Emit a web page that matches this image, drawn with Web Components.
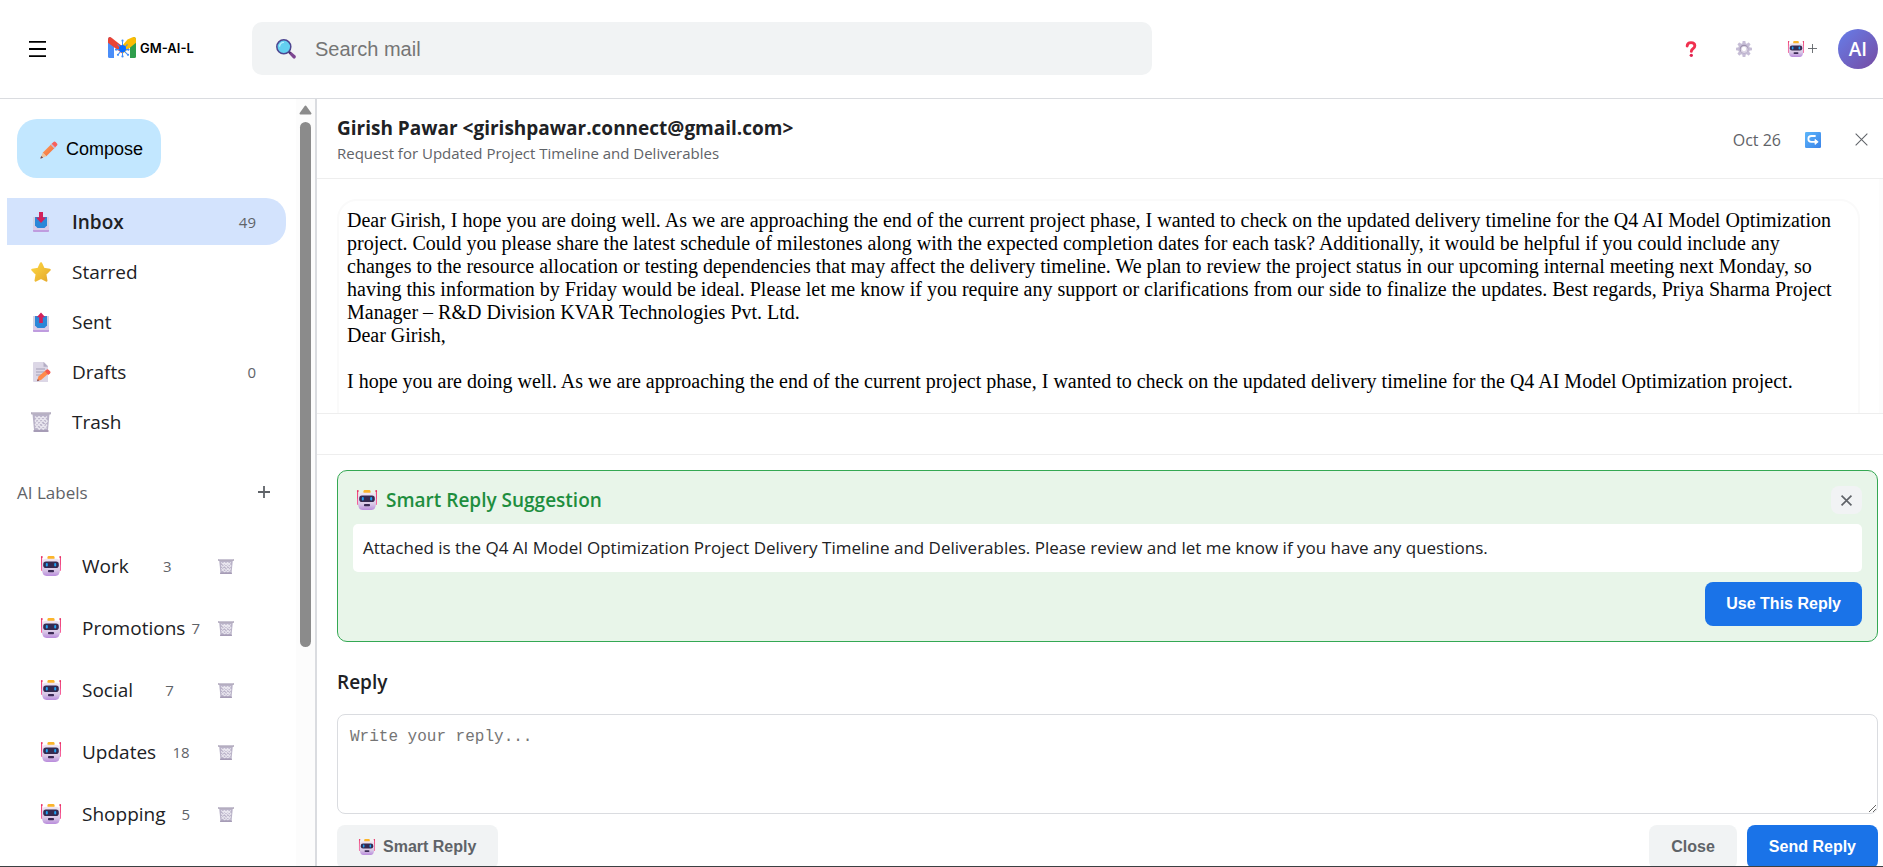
<!DOCTYPE html>
<html lang="en">
<head>
<meta charset="utf-8">
<title>GM-AI-L</title>
<style>
  html, body { margin: 0; height: 100%; }
  body { font-family: "Open Sans", "Noto Sans", sans-serif; color: #202124; background: #fff; overflow: hidden; }
</style>
</head>
<body>
<mail-app></mail-app>

<script>
const ICONS = {
  robot: `<defs><linearGradient id="h" x1="0" y1="0" x2="0" y2="1"><stop offset="0" stop-color="#efe6f3"/><stop offset=".65" stop-color="#d9c9e6"/><stop offset="1" stop-color="#b98bdc"/></linearGradient></defs>
    <path d="M.6 1v13M19.400 1v13" stroke="#f0407a" stroke-width="1.100"/><circle cx=".8" cy="1" r=".9" fill="#e82f63"/><circle cx="19.200" cy="1" r=".9" fill="#e82f63"/>
    <rect x="0" y="8.500" width="2.500" height="6.500" rx="1" fill="#f5609a"/><rect x="17.500" y="8.500" width="2.500" height="6.500" rx="1" fill="#f5609a"/>
    <rect x="6.500" y="0" width="7" height="4" rx="1.200" fill="#fbb52c"/>
    <path d="M5 2.800h10q4 0 4 4v7q-.2 6.200-4.600 6.200H5.600Q1.200 20 1 13.800v-7q0-4 4-4z" fill="url(#h)"/>
    <rect x="2.200" y="5.600" width="15.600" height="6.400" rx="2.800" fill="#352a50"/>
    <rect x="4.800" y="7" width="2" height="3.600" rx="1" fill="#1fa2f2"/><rect x="13.200" y="7" width="2" height="3.600" rx="1" fill="#1fa2f2"/>
    <rect x="7" y="14" width="6" height="2.200" rx=".8" fill="#3b2a55"/>`,
  trash: `<path d="M1.500 2h17l-1.700 18H3.200z" fill="#b9b2c8"/>
    <path d="M4 4.500l11.500 12M8 4.500l8 8M12 4.500l4.500 5M4 9l8.500 8.500M4.500 13l4 4.500M16 4.500L4.500 16M12 4.500L4 13M8 4.500L4 9M16.500 9L8 17.500M16 13l-4 4.500" stroke="#e9e6ef" stroke-width="1.300"/>
    <rect x="0" y="0" width="20" height="2.600" rx=".8" fill="#b4adbf"/><path d="M1 .7h18" stroke="#dcd8e4" stroke-width=".7"/><rect x="2.500" y="18" width="15" height="2" rx=".6" fill="#a69cb6"/>`,
  inbox: `<path d="M2 5h16v12H2z" fill="#cfd3e4"/><path d="M4 5h12v8l-3 3H7l-3-3z" fill="#2b87d8"/>
    <path d="M2 14h4.500l1.500 2h4l1.500-2H18v5q0 1-1 1H3q-1 0-1-1z" fill="#d9cbe6"/><path d="M4 10h12v3.500l-2.500 2.500h-7L4 13.500z" fill="#2b87d8"/><path d="M2 18h16v1q0 1-1 1H3q-1 0-1-1z" fill="#bf9cdf"/>
    <path d="M8 0h4v5.500h3L10 11 5 5.500h3z" fill="#d3225b"/>`,
  sent: `<path d="M2 4h16v13H2z" fill="#cfd3e4"/><path d="M4 4h12v9l-3 3H7l-3-3z" fill="#2b87d8"/>
    <path d="M2 14h4.500l1.500 2h4l1.500-2H18v5q0 1-1 1H3q-1 0-1-1z" fill="#d9cbe6"/><path d="M4 10h12v3.500l-2.500 2.500h-7L4 13.500z" fill="#2b87d8"/><path d="M2 18h16v1q0 1-1 1H3q-1 0-1-1z" fill="#bf9cdf"/>
    <path d="M8.200 11h3.600V5.300h2.400L10 .5 5.800 5.300h2.400z" fill="#d3225b"/>`,
  star: `<defs><linearGradient id="s" x1="0" y1="0" x2="1" y2="1"><stop offset="0" stop-color="#fdd642"/><stop offset="1" stop-color="#e5a92c"/></linearGradient></defs>
    <path d="M10 1.300l2.700 5.600 6 .9-4.400 4.300 1.100 6.500L10 15.700 4.600 18.600l1.100-6.500L1.300 7.800l6-.9z" fill="url(#s)" stroke="url(#s)" stroke-width="2.200" stroke-linejoin="round"/>`,
  draft: `<path d="M3 0h10l4 4v16H3q-1 0-1-1V1q0-1 1-1z" fill="#dcd7e6"/><path d="M12.500 0L17 4.800h-4.500z" fill="#b3adc4"/>
    <path d="M5 7h9M5 10h9M5 13h7" stroke="#a49fb5" stroke-width="1.100"/>
    <path d="M6 19l1.500-4.500 7-6 3 3-7.500 6.500z" fill="#ff8a4c"/><path d="M14 9l1.800-1.500q1-.6 2 .5l1.400 1.600q.8 1-.2 1.900L17.200 13z" fill="#f4574d"/><path d="M6 19.300l.8-2.300 1.400 1.500z" fill="#7d4e55"/>`,
  pencil: `<defs><linearGradient id="p" x1="0" y1="0" x2="1" y2="1"><stop offset="0" stop-color="#ffa35a"/><stop offset="1" stop-color="#f2663b"/></linearGradient></defs>
    <path d="M3 13L13 3l4 4L7 17z" fill="url(#p)"/><path d="M11.700 4.300l4 4 1.600-1.600-4-4z" fill="#c9bbd6"/><path d="M13 3l2-2q1.200-1 2.400.2l1.500 1.500q1.100 1.200 0 2.300l-2 2z" fill="#f7605c"/>
    <path d="M3 13l4 4-6 2.400q-.8.200-.5-.6z" fill="#f0c49a"/><path d="M1.500 16.600l2 2-2.500.9q-.8.200-.5-.6z" fill="#6b4657"/>`,
  search: `<path d="M12.700 14.500l2-2 4.600 4q1.200 1.300.1 2.500-1.200 1.200-2.500.1z" fill="#7d4691"/><path d="M11.500 13l1.700-1.500 2 2-1.700 1.500z" fill="#4b3466"/>
    <circle cx="7.800" cy="7.800" r="7" fill="#63d0f0" stroke="#4d4590" stroke-width="1.500"/><path d="M3.600 7.200q.4-3.400 3.800-3.900" stroke="#b6efff" stroke-width="1.300" fill="none" stroke-linecap="round"/>`,
  question: `<path d="M5.200 6.200Q5.400 2 10 2q4.800 0 4.800 4 0 2.200-2.400 3.700-2 1.200-2 3.300" fill="none" stroke="#f0304f" stroke-width="3.600" stroke-linecap="round"/><circle cx="10.400" cy="17.900" r="2.100" fill="#e0244f"/>`,
  gear: `<g fill="#c6bdd6"><circle cx="10" cy="10" r="7.400"/><rect x="8" y="0" width="4" height="20" rx="1"/><rect x="0" y="8" width="20" height="4" rx="1"/><g transform="rotate(45 10 10)"><rect x="8" y="0" width="4" height="20" rx="1"/><rect x="0" y="8" width="20" height="4" rx="1"/></g></g><circle cx="10" cy="10" r="5.400" fill="#9d92ae"/><circle cx="10.300" cy="10.500" r="4.400" fill="#ddd6e6"/><circle cx="10" cy="10" r="2.700" fill="#fff"/>`,
  reply: `<defs><linearGradient id="r" x1="0" y1="0" x2="1" y2="1"><stop offset="0" stop-color="#5cb6fb"/><stop offset="1" stop-color="#3b83e8"/></linearGradient></defs><rect width="20" height="20" rx="1.500" fill="url(#r)"/>
    <path d="M12.500 5H8q-3.800 0-3.800 3.600T8 12.300h6" stroke="#fff" stroke-width="2.200" fill="none" stroke-linecap="round"/><path d="M12.500 9.200l4 3.100-4 3.300z" fill="#fff" stroke="#fff" stroke-linejoin="round"/>`,
  menu: `<path d="M0 1h20M0 10h20M0 19h20" stroke="#000" stroke-width="2.300"/>`,
  plus: `<path d="M10 0v20M0 10h20" stroke="#5f6368" stroke-width="var(--stroke, 2)"/>`,
  close: `<path d="M1 1l18 18M19 1L1 19" stroke="#5f6368" stroke-width="var(--stroke, 2)"/>`,
  mail: `<path d="M0 2.500Q0 0 2.200 0L6 4v16H1.500Q0 20 0 18.500z" fill="#4a8df8"/><path d="M22 4l3.800-4Q28 0 28 2.500v16q0 1.500-1.500 1.500H22z" fill="#2f9e4c"/>
    <path d="M19.500 2.300L24.600.2Q28-.6 28 3v2.400L14.500 16l-.5-7.500z" fill="#fbbc04"/><path d="M0 3Q0-.8 3.200.4L14 8.600V15.500L0 5.400z" fill="#ea4335"/>
    <path d="M14.500 4v14M8 12h13M9.500 7l10 9.500M19.500 7l-9 9" stroke="#3f8cf7" stroke-width="1"/><circle cx="14.500" cy="11" r="3.500" fill="#0a6bff"/><g fill="#3f8cf7"><circle cx="14.500" cy="3.500" r="1.100"/><circle cx="10" cy="17" r="1.100"/><circle cx="14.500" cy="18.500" r="1.100"/><circle cx="20" cy="17" r="1.100"/><circle cx="8" cy="12" r="1.100"/><circle cx="20.500" cy="12" r="1.100"/></g>`
};

function define(name, html, setup) {
  const template = document.createElement('template');
  template.innerHTML = html;
  customElements.define(name, class extends HTMLElement {
    constructor() {
      super();
      this.attachShadow({ mode: 'open' }).append(template.content.cloneNode(true));
    }
    connectedCallback() { if (setup) setup(this, this.shadowRoot); }
  });
}

define('ui-icon', `<style>
  :host { display: inline-block; flex: none; width: 20px; height: 20px; }
  svg { display: block; width: 100%; height: 100%; overflow: visible; }
</style><svg aria-hidden="true" fill="none" preserveAspectRatio="none"></svg>`, (el, root) => {
  const name = el.getAttribute('name');
  const svg = root.querySelector('svg');
  svg.setAttribute('viewBox', name === 'mail' ? '0 0 28 20' : '0 0 20 20');
  svg.innerHTML = ICONS[name];
});

define('action-button', `<style>
  :host { display: block; }
  button { display: flex; align-items: center; gap: 8px; height: 44px; padding: 0 var(--button-padding, 21px); border: 0; border-radius: 8px;
    font: bold 16px "Liberation Sans", Arial, sans-serif; color: #5f6368; background: #f1f3f4; white-space: nowrap; cursor: pointer; }
  :host([primary]) button { color: #fff; background: #1a73e8; }
</style><button type="button"><slot></slot></button>`);

define('scroll-track', `<style>
  :host { display: flex; flex-direction: column; align-items: center; flex: none; width: 19px; background: #fcfcfc; }
  svg { display: block; margin: 6px 0 7px; }
  i { width: 11px; height: 71%; max-height: 525px; border-radius: 6px; background: #8b8b8b; }
</style><svg width="13" height="10" aria-hidden="true"><path d="M6.500 1.500L11.500 8.500H1.500z" fill="#8b8b8b" stroke="#8b8b8b" stroke-width="2" stroke-linejoin="round"/></svg><i></i>`);

define('app-header', `<style>
  :host { display: flex; align-items: center; height: 97px; padding: 0 5px 1px 17px; border-bottom: 1px solid #dadce0; box-sizing: content-box; }
  button { display: flex; align-items: center; justify-content: center; width: 53px; height: 40px; padding: 0; border: 0; background: none; cursor: pointer; }
  .menu { width: 41px; margin-right: 50px; }
  .menu ui-icon { width: 17px; height: 16px; }
  .logo { display: flex; align-items: center; gap: 4px; width: 144px; padding-bottom: 2px; color: #000; text-decoration: none; font: 600 13px Inter, sans-serif; }
  .logo ui-icon { width: 28px; height: 21px; }
  .search { display: flex; align-items: center; gap: 19px; flex: 0 1 900px; box-sizing: border-box; height: 53px; padding: 0 24px; border-radius: 10px; background: #f1f3f4; }
  input { flex: 1; min-width: 0; padding: 0; border: 0; outline: 0; background: none; font: 20px/24px "Liberation Sans", Arial, sans-serif; color: #202124; }
  input::placeholder { color: #757575; opacity: 1; }
  nav { display: flex; align-items: center; margin-left: auto; }
  nav ui-icon { width: 16px; height: 16px; }
  .label { width: 68px; gap: 4px; padding-right: 3px; }
  .label .plus { width: 9px; height: 9px; }
  .avatar { width: 40px; border-radius: 50%; color: #fff; background: linear-gradient(135deg, #667eea, #764ba2); font: 600 19px/40px "Open Sans", sans-serif; }
</style>
<button class="menu" type="button" aria-label="Menu"><ui-icon name="menu"></ui-icon></button>
<a class="logo" href="#"><ui-icon name="mail"></ui-icon><span>GM-AI-L</span></a>
<label class="search"><ui-icon name="search"></ui-icon><input type="text" placeholder="Search mail" aria-label="Search mail"></label>
<nav>
  <button type="button" aria-label="Help"><ui-icon name="question"></ui-icon></button>
  <button type="button" aria-label="Settings"><ui-icon name="gear"></ui-icon></button>
  <button class="label" type="button" aria-label="Add AI label"><ui-icon name="robot"></ui-icon><ui-icon class="plus" name="plus"></ui-icon></button>
  <button class="avatar" type="button">AI</button>
</nav>`);

define('folder-item', `<style>
  :host { display: block; }
  a { display: flex; align-items: center; height: 47px; padding: 0 30px 0 24px; border-radius: 0 20px 20px 0; color: #202124; text-decoration: none; font-size: 19px; }
  :host([active]) a { background: #d3e3fd; font-weight: 500; }
  .name { flex: 1; margin-left: 21px; }
  .count { font-size: 15px; color: #5f6368; }
  :host([active]) .name { font-weight: 600; }
</style><a href="#"><span class="name"><slot></slot></span><span class="count"></span></a>`, (el, root) => {
  const icon = document.createElement('ui-icon');
  icon.setAttribute('name', el.getAttribute('icon'));
  root.querySelector('a').prepend(icon);
  root.querySelector('.count').textContent = el.getAttribute('count') || '';
});

define('label-item', `<style>
  :host { display: flex; align-items: center; height: 62px; padding: 0 50px 0 41px; }
  a { display: flex; flex: 1; align-items: center; color: #202124; text-decoration: none; font-size: 19px; }
  .name { margin-left: 21px; }
  .count { margin: 0 auto; font-size: 15px; color: #5f6368; }
  button { padding: 12px; border: 0; background: none; cursor: pointer; }
  button ui-icon { display: block; width: 16px; height: 15px; }
</style><a href="#"><ui-icon name="robot"></ui-icon><span class="name"><slot></slot></span><span class="count"></span></a>
<button type="button" aria-label="Delete label"><ui-icon name="trash"></ui-icon></button>`, (el, root) => {
  root.querySelector('.count').textContent = el.getAttribute('count');
});

define('mail-sidebar', `<style>
  :host { display: flex; box-sizing: border-box; width: 317px; border-right: 2px solid #dadce0; overflow: hidden; }
  .content { flex: 1; min-width: 0; }
  .compose { display: flex; align-items: center; gap: 8px; height: 59px; margin: 20px 0 20px 17px; padding: 2px 18px 0 23px; border: 0; border-radius: 20px; background: #c2e7ff; color: #000; font: 18px "Liberation Sans", Arial, sans-serif; cursor: pointer; }
  .compose ui-icon { width: 18px; height: 18px; }
  .folders { display: grid; gap: 3px; margin: 0 10px 0 7px; }
  .heading { display: flex; align-items: center; justify-content: space-between; height: 40px; margin: 27px 14px 23px 17px; color: #5f6368; }
  h2 { margin: 0; font-size: 17px; font-weight: 500; }
  .heading button { padding: 12px; border: 0; background: none; cursor: pointer; }
  .heading ui-icon { display: block; width: 12px; height: 12px; --stroke: 3; }
</style>
<div class="content">
  <button class="compose" type="button"><ui-icon name="pencil"></ui-icon>Compose</button>
  <nav class="folders">
    <folder-item icon="inbox" count="49" active>Inbox</folder-item>
    <folder-item icon="star">Starred</folder-item>
    <folder-item icon="sent">Sent</folder-item>
    <folder-item icon="draft" count="0">Drafts</folder-item>
    <folder-item icon="trash">Trash</folder-item>
  </nav>
  <div class="heading"><h2>AI Labels</h2><button type="button" aria-label="Add label"><ui-icon name="plus"></ui-icon></button></div>
  <nav>
    <label-item count="3">Work</label-item>
    <label-item count="7">Promotions</label-item>
    <label-item count="7">Social</label-item>
    <label-item count="18">Updates</label-item>
    <label-item count="5">Shopping</label-item>
  </nav>
</div>
<scroll-track></scroll-track>`);

define('mail-heading', `<style>
  :host { display: flex; align-items: center; box-sizing: border-box; height: 80px; padding: 2px 6px 0 20px; border-bottom: 1px solid #eee; }
  .text { flex: 1; min-width: 0; }
  h1 { margin: 0; font-size: 19px; line-height: 26px; font-weight: 700; }
  p { margin: 0; font-size: 15px; line-height: 24px; color: #5f6368; }
  time { font-size: 16px; color: #5f6368; }
  button { display: flex; align-items: center; justify-content: center; width: 48px; height: 48px; padding: 0; border: 0; background: none; cursor: pointer; --stroke: 1.6; }
  .reply { width: 64px; }
  .reply ui-icon { width: 16px; height: 16px; }
  .close { width: 32px; }
  .close ui-icon { width: 13px; height: 13px; }
</style>
<div class="text"><h1><slot name="from"></slot></h1><p><slot name="subject"></slot></p></div>
<time><slot name="date"></slot></time>
<button class="reply" type="button" aria-label="Reply"><ui-icon name="reply"></ui-icon></button>
<button class="close" type="button" aria-label="Close"><ui-icon name="close"></ui-icon></button>`);

define('mail-body', `<style>
  :host { display: flex; height: 234px; border-bottom: 1px solid #eee; overflow: hidden; }
  article { flex: 1; min-width: 0; height: 300px; box-sizing: border-box; margin: 20px 19px 0 20px; padding: 8px 16px 8px 8px; border: 2px solid #fafafa; border-radius: 20px; color: #000; font: 20px/23px "Liberation Serif", "Times New Roman", serif; }
  i { flex: none; width: 4px; background: #fcfcfc; }
</style><article><slot></slot></article><i></i>`);

define('smart-suggestion', `<style>
  :host { display: block; margin: 15px 5px 0 20px; padding: 15px; border: 1px solid #34a853; border-radius: 10px; background: #e8f5e9; }
  header { display: flex; align-items: center; height: 28px; margin-bottom: 10px; padding-left: 4px; }
  h2 { flex: 1; margin: 0 0 0 9px; font-size: 19px; line-height: 28px; font-weight: 600; color: #1e8e3e; }
  header button { display: flex; align-items: center; justify-content: center; width: 31px; height: 28px; padding: 0; border: 0; border-radius: 8px; background: #f1f3f4; cursor: pointer; --stroke: 3; }
  header button ui-icon { width: 11px; height: 11px; }
  p { margin: 0 0 10px; padding: 12px 10px; border-radius: 5px; background: #fff; font-size: 17px; line-height: 24px; }
  footer { display: flex; justify-content: flex-end; }
</style>
<header><ui-icon name="robot"></ui-icon><h2>Smart Reply Suggestion</h2><button type="button" aria-label="Dismiss"><ui-icon name="close"></ui-icon></button></header>
<p><slot></slot></p>
<footer><action-button primary>Use This Reply</action-button></footer>`);

define('reply-form', `<style>
  :host { display: block; margin: 25px 5px 0 20px; --button-padding: 22px; }
  label { display: block; margin-bottom: 17px; font-size: 19px; line-height: 30px; font-weight: 600; }
  textarea { display: block; box-sizing: border-box; width: 100%; height: 100px; padding: 12px; border: 1px solid #dadce0; border-radius: 8px; outline: 0; resize: vertical; font: 16px/20px "Liberation Mono", "Courier New", monospace; }
  textarea::placeholder { color: #757575; opacity: 1; }
  .actions { display: flex; gap: 10px; margin-top: 11px; }
  .actions ui-icon { width: 16px; height: 16px; }
  .spacer { flex: 1; }
</style>
<label for="reply">Reply</label>
<textarea id="reply" placeholder="Write your reply..."></textarea>
<div class="actions">
  <action-button><ui-icon name="robot"></ui-icon>Smart Reply</action-button>
  <span class="spacer"></span>
  <action-button>Close</action-button>
  <action-button primary>Send Reply</action-button>
</div>`);

define('mail-app', `<style>
  :host { display: flex; flex-direction: column; box-sizing: border-box; height: 100vh; border-bottom: 1px solid #3c4043; overflow: hidden; }
  app-header { flex: none; }
  .columns { display: flex; flex: 1; min-height: 0; }
  mail-sidebar { flex: none; }
  main { flex: 1; min-width: 0; overflow: hidden; }
  .attachments { height: 40px; border-bottom: 1px solid #eee; }
</style>
<app-header></app-header>
<div class="columns">
  <mail-sidebar></mail-sidebar>
  <main>
    <mail-heading><span slot="from">Girish Pawar &lt;girishpawar.connect@gmail.com&gt;</span><span slot="subject">Request for Updated Project Timeline and Deliverables</span><span slot="date">Oct 26</span></mail-heading>
    <mail-body>Dear Girish, I hope you are doing well. As we are approaching the end of the current project phase, I wanted to check on the updated delivery timeline for the Q4 AI Model Optimization project. Could you please share the latest schedule of milestones along with the expected completion dates for each task? Additionally, it would be helpful if you could include any changes to the resource allocation or testing dependencies that may affect the delivery timeline. We plan to review the project status in our upcoming internal meeting next Monday, so having this information by Friday would be ideal. Please let me know if you require any support or clarifications from our side to finalize the updates. Best regards, Priya Sharma Project Manager – R&amp;D Division KVAR Technologies Pvt. Ltd.<br>Dear Girish,<br><br>I hope you are doing well. As we are approaching the end of the current project phase, I wanted to check on the updated delivery timeline for the Q4 AI Model Optimization project.</mail-body>
    <div class="attachments"></div>
    <smart-suggestion>Attached is the Q4 AI Model Optimization Project Delivery Timeline and Deliverables. Please review and let me know if you have any questions.</smart-suggestion>
    <reply-form></reply-form>
  </main>
</div>`);
</script>
</body>
</html>
